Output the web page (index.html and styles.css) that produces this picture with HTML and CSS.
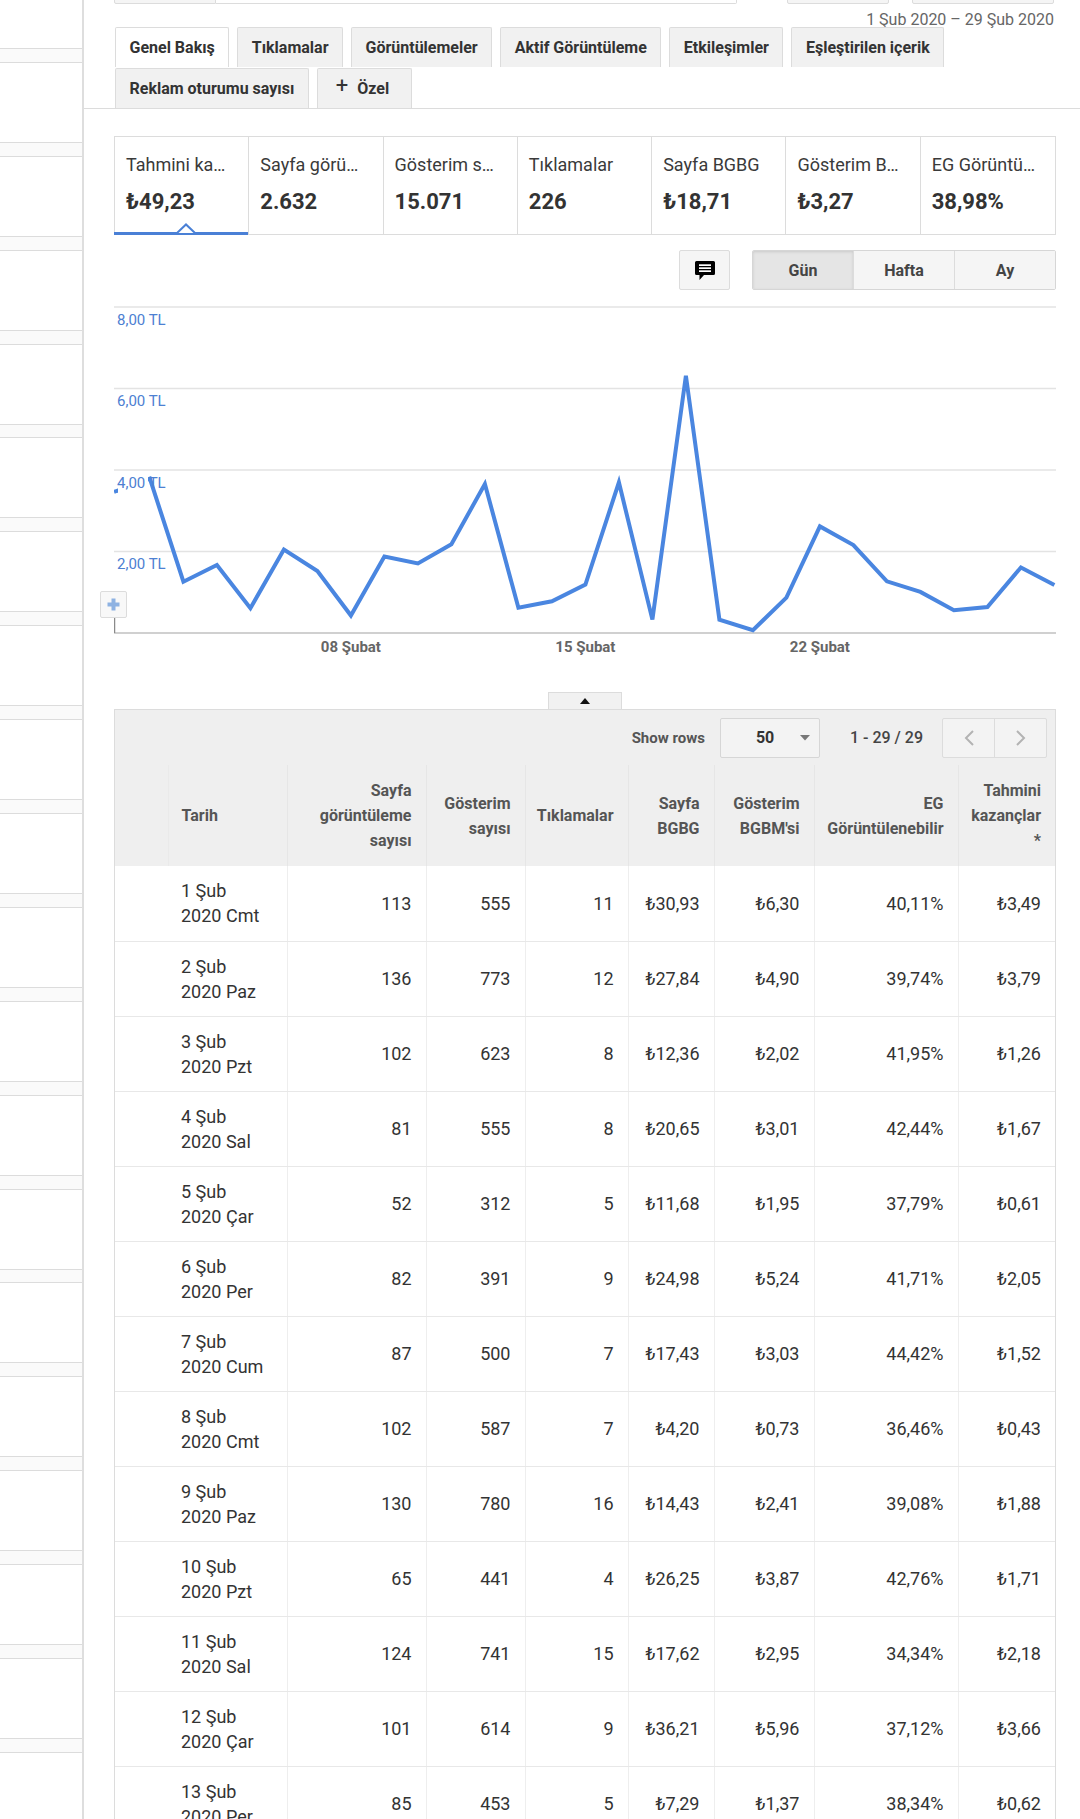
FILE: index.html
```html
<!DOCTYPE html>
<html lang="tr">
<head>
<meta charset="utf-8">
<title>AdSense Raporu</title>
<link rel="stylesheet" href="styles.css">
</head>
<body>
<div class="page">
  <aside class="sidebar">
    <div class="side-list">
      <div class="side-item"></div><div class="side-item"></div><div class="side-item"></div><div class="side-item"></div>
      <div class="side-item"></div><div class="side-item"></div><div class="side-item"></div><div class="side-item"></div>
      <div class="side-item"></div><div class="side-item"></div><div class="side-item"></div><div class="side-item"></div>
      <div class="side-item"></div><div class="side-item"></div><div class="side-item"></div><div class="side-item"></div>
      <div class="side-item"></div><div class="side-item"></div><div class="side-item"></div><div class="side-item"></div>
    </div>
  </aside>

  <main class="main">
    <div class="topbar">
      <div class="tb tb-sel"></div>
      <div class="tb tb-input"></div>
      <div class="tb tb-btn1"></div>
      <div class="tb tb-btn2"></div>
    </div>
    <div class="daterange">1 Şub 2020 – 29 Şub 2020</div>

    <div class="tabs-wrap">
      <nav class="tabs">
        <div class="tab active">Genel Bakış</div>
        <div class="tab">Tıklamalar</div>
        <div class="tab">Görüntülemeler</div>
        <div class="tab">Aktif Görüntüleme</div>
        <div class="tab">Etkileşimler</div>
        <div class="tab">Eşleştirilen içerik</div>
        <div class="tab">Reklam oturumu sayısı</div>
        <div class="tab tab-custom"><span class="plus">+</span>Özel</div>
      </nav>
    </div>

    <div class="content">
      <div class="cards">
        <div class="card selected">
          <div class="card-title">Tahmini ka…</div>
          <div class="card-value">₺49,23</div>
          <svg class="notch" width="22" height="11" viewBox="0 0 22 11"><polygon points="1,11 11,1.5 21,11" fill="#fff" stroke="#4a80d6" stroke-width="2"/></svg>
        </div>
        <div class="card"><div class="card-title">Sayfa görü…</div><div class="card-value">2.632</div></div>
        <div class="card"><div class="card-title">Gösterim s…</div><div class="card-value">15.071</div></div>
        <div class="card"><div class="card-title">Tıklamalar</div><div class="card-value">226</div></div>
        <div class="card"><div class="card-title">Sayfa BGBG</div><div class="card-value">₺18,71</div></div>
        <div class="card"><div class="card-title">Gösterim B…</div><div class="card-value">₺3,27</div></div>
        <div class="card"><div class="card-title">EG Görüntü…</div><div class="card-value">38,98%</div></div>
      </div>

      <div class="controls">
        <div class="icon-btn">
          <svg width="24" height="24" viewBox="0 0 24 24">
            <path d="M3.5 3h17A1.5 1.5 0 0 1 22 4.5v11a1.5 1.5 0 0 1-1.5 1.5H11l-4.5 5V17h-3A1.5 1.5 0 0 1 2 15.5v-11A1.5 1.5 0 0 1 3.5 3z" fill="#000"/>
            <rect x="6" y="6.3" width="12" height="1.7" fill="#fff"/>
            <rect x="6" y="9.3" width="12" height="1.7" fill="#fff"/>
            <rect x="6" y="12.3" width="12" height="1.7" fill="#fff"/>
          </svg>
        </div>
        <div class="seg">
          <div class="seg-btn on">Gün</div>
          <div class="seg-btn">Hafta</div>
          <div class="seg-btn">Ay</div>
        </div>
      </div>

      <div class="chart">
        <svg width="942" height="360" viewBox="114 300 942 360">
          <g stroke="#e3e3e3" stroke-width="1.5">
            <line x1="114" y1="308" x2="1056" y2="308"/>
            <line x1="114" y1="389.5" x2="1056" y2="389.5"/>
            <line x1="114" y1="471" x2="1056" y2="471"/>
            <line x1="114" y1="552.5" x2="1056" y2="552.5"/>
          </g>
          <line x1="114" y1="634" x2="1056" y2="634" stroke="#d0d0d0" stroke-width="2"/>
          <line x1="114.5" y1="619" x2="114.5" y2="634" stroke="#8a8a8a" stroke-width="1.5"/>
          <polyline fill="none" stroke="#4a86e0" stroke-width="4" stroke-linejoin="miter"
            points="114,493 116.4,492 149.9,479.7 183.4,582.7 216.9,566 250.4,609.2 283.9,550.6 317.4,572.1 350.9,616.5 384.4,557.5 417.9,564.4 451.4,545.3 484.9,485 518.4,608.8 551.9,602.3 585.4,585.6 618.9,483.4 652.4,620.6 685.9,376.8 719.4,620.6 752.9,631.2 786.4,598.6 819.9,527.4 853.4,546.1 886.9,582.3 920.4,592.9 953.9,611.2 987.4,608 1020.9,568.5 1054.4,586"/>
          <g class="ylab">
            <rect x="118" y="313" width="30" height="20" fill="#fff"/>
            <text x="117" y="325.5">8,00 TL</text>
            <rect x="118" y="394.5" width="30" height="20" fill="#fff"/>
            <text x="117" y="407">6,00 TL</text>
            <rect x="118" y="476" width="30" height="20" fill="#fff"/>
            <text x="117" y="488.5">4,00 TL</text>
            <rect x="118" y="557.5" width="30" height="20" fill="#fff"/>
            <text x="117" y="570">2,00 TL</text>
          </g>
          <g class="xlab">
            <text x="350.9" y="653">08 Şubat</text>
            <text x="585.4" y="653">15 Şubat</text>
            <text x="819.9" y="653">22 Şubat</text>
          </g>
        </svg>
        <div class="zoom-btn">
          <svg width="13" height="13" viewBox="0 0 13 13"><rect x="4.5" y="0.5" width="4" height="12" fill="#8eb2e2"/><rect x="0.5" y="4.5" width="12" height="4" fill="#8eb2e2"/></svg>
        </div>
      </div>

      <div class="table-toggle">
        <svg width="10" height="6" viewBox="0 0 10 6"><polygon points="0,6 5,0 10,6" fill="#111"/></svg>
      </div>

      <div class="table-box">
        <div class="toolbar">
          <span class="show-rows">Show rows</span>
          <div class="rows-select"><span class="rows-val">50</span><svg width="10" height="6" viewBox="0 0 10 6"><polygon points="0,0 10,0 5,5.5" fill="#777"/></svg></div>
          <span class="range">1 - 29 / 29</span>
          <div class="pager">
            <div class="pg-btn"><svg width="12" height="18" viewBox="0 0 12 18"><polyline points="10,2 3,9 10,16" fill="none" stroke="#b3b3b3" stroke-width="2"/></svg></div>
            <div class="pg-btn"><svg width="12" height="18" viewBox="0 0 12 18"><polyline points="2,2 9,9 2,16" fill="none" stroke="#b3b3b3" stroke-width="2"/></svg></div>
          </div>
        </div>
        <table class="data">
          <colgroup>
            <col class="c-blank"><col class="c-date"><col class="c-pv"><col class="c-imp"><col class="c-clk"><col class="c-bgbg"><col class="c-bgbm"><col class="c-eg"><col class="c-earn">
          </colgroup>
          <thead>
            <tr>
              <th class="blank"></th>
              <th class="date">Tarih</th>
              <th>Sayfa görüntüleme sayısı</th>
              <th>Gösterim sayısı</th>
              <th>Tıklamalar</th>
              <th>Sayfa BGBG</th>
              <th>Gösterim BGBM'si</th>
              <th>EG Görüntülenebilir</th>
              <th>Tahmini kazançlar *</th>
            </tr>
          </thead>
          <tbody>
            <tr><td class="blank"></td><td class="date">1 Şub<br>2020 Cmt</td><td>113</td><td>555</td><td>11</td><td>₺30,93</td><td>₺6,30</td><td>40,11%</td><td>₺3,49</td></tr>
            <tr><td class="blank"></td><td class="date">2 Şub<br>2020 Paz</td><td>136</td><td>773</td><td>12</td><td>₺27,84</td><td>₺4,90</td><td>39,74%</td><td>₺3,79</td></tr>
            <tr><td class="blank"></td><td class="date">3 Şub<br>2020 Pzt</td><td>102</td><td>623</td><td>8</td><td>₺12,36</td><td>₺2,02</td><td>41,95%</td><td>₺1,26</td></tr>
            <tr><td class="blank"></td><td class="date">4 Şub<br>2020 Sal</td><td>81</td><td>555</td><td>8</td><td>₺20,65</td><td>₺3,01</td><td>42,44%</td><td>₺1,67</td></tr>
            <tr><td class="blank"></td><td class="date">5 Şub<br>2020 Çar</td><td>52</td><td>312</td><td>5</td><td>₺11,68</td><td>₺1,95</td><td>37,79%</td><td>₺0,61</td></tr>
            <tr><td class="blank"></td><td class="date">6 Şub<br>2020 Per</td><td>82</td><td>391</td><td>9</td><td>₺24,98</td><td>₺5,24</td><td>41,71%</td><td>₺2,05</td></tr>
            <tr><td class="blank"></td><td class="date">7 Şub<br>2020 Cum</td><td>87</td><td>500</td><td>7</td><td>₺17,43</td><td>₺3,03</td><td>44,42%</td><td>₺1,52</td></tr>
            <tr><td class="blank"></td><td class="date">8 Şub<br>2020 Cmt</td><td>102</td><td>587</td><td>7</td><td>₺4,20</td><td>₺0,73</td><td>36,46%</td><td>₺0,43</td></tr>
            <tr><td class="blank"></td><td class="date">9 Şub<br>2020 Paz</td><td>130</td><td>780</td><td>16</td><td>₺14,43</td><td>₺2,41</td><td>39,08%</td><td>₺1,88</td></tr>
            <tr><td class="blank"></td><td class="date">10 Şub<br>2020 Pzt</td><td>65</td><td>441</td><td>4</td><td>₺26,25</td><td>₺3,87</td><td>42,76%</td><td>₺1,71</td></tr>
            <tr><td class="blank"></td><td class="date">11 Şub<br>2020 Sal</td><td>124</td><td>741</td><td>15</td><td>₺17,62</td><td>₺2,95</td><td>34,34%</td><td>₺2,18</td></tr>
            <tr><td class="blank"></td><td class="date">12 Şub<br>2020 Çar</td><td>101</td><td>614</td><td>9</td><td>₺36,21</td><td>₺5,96</td><td>37,12%</td><td>₺3,66</td></tr>
            <tr><td class="blank"></td><td class="date">13 Şub<br>2020 Per</td><td>85</td><td>453</td><td>5</td><td>₺7,29</td><td>₺1,37</td><td>38,34%</td><td>₺0,62</td></tr>
          </tbody>
        </table>
      </div>
    </div>
  </main>
</div>
</body>
</html>
```

FILE: styles.css
```css
* { box-sizing: border-box; }

html, body {
  margin: 0;
  padding: 0;
  background: #fff;
}

body {
  font-family: Roboto, "Noto Sans", "DejaVu Sans", sans-serif;
  color: #333;
  overflow: hidden;
}

.page {
  display: flex;
  min-height: 1819px;
}

/* ---------- left sidebar ---------- */
.sidebar {
  width: 84px;
  flex: none;
  border-right: 2px solid #dedede;
  background: #fafafa;
  overflow: hidden;
}

.side-list { margin-top: -32px; }

.side-item {
  height: 81px;
  margin-bottom: 12.9px;
  border-top: 1px solid #dcdcdc;
  border-bottom: 1px solid #dcdcdc;
  background: #fff;
}

/* ---------- main ---------- */
.main {
  flex: 1;
  min-width: 0;
}

.topbar {
  display: flex;
  align-items: flex-end;
  height: 4px;
  padding-left: 30px;
}

.tb {
  flex: none;
  height: 40px;
  border: 1px solid #dcdcdc;
  border-radius: 2px;
  background: #fff;
}
.tb-sel { width: 102px; background: #f5f5f5; border-radius: 2px 0 0 2px; }
.tb-input { width: 521px; border-left: none; border-radius: 0 2px 2px 0; }
.tb-btn1 { width: 102px; margin-left: 50px; background: #f5f5f5; }
.tb-btn2 { width: 142px; margin-left: 23px; background: #f5f5f5; }

.daterange {
  height: 23px;
  line-height: 32px;
  text-align: right;
  padding-right: 26px;
  font-size: 16px;
  color: #666;
  white-space: nowrap;
}

/* ---------- tabs ---------- */
.tabs-wrap {
  border-bottom: 1px solid #dcdcdc;
  padding: 0 24px 0 31px;
}

.tabs {
  display: flex;
  flex-wrap: wrap;
  column-gap: 8px;
  row-gap: 1px;
}

.tab {
  height: 40px;
  padding: 0 13.5px;
  display: flex;
  align-items: center;
  border: 1px solid #dcdcdc;
  border-bottom: none;
  border-radius: 2px 2px 0 0;
  background: #f1f1f1;
  font-size: 16px;
  font-weight: 700;
  color: #333;
  white-space: nowrap;
}
.tab.active { background: #fff; }
.tab-custom { padding: 0 22px 0 18px; }
.tab-custom .plus {
  font-weight: 400;
  font-size: 22px;
  margin-right: 9px;
  line-height: 1;
  position: relative;
  top: -3px;
}

/* ---------- content ---------- */
.content {
  padding: 0 24px 0 30px;
}

.cards {
  margin-top: 27px;
  height: 99px;
  display: grid;
  grid-template-columns: repeat(7, 1fr);
  border: 1px solid #dcdcdc;
}

.card {
  position: relative;
  padding: 16px 0 0 11px;
  border-right: 1px solid #dcdcdc;
  white-space: nowrap;
}
.card:last-child { border-right: none; }

.card-title {
  font-size: 18px;
  line-height: 24px;
  color: #3a3a3a;
}
.card-value {
  margin-top: 10px;
  font-size: 22px;
  line-height: 30px;
  font-weight: 700;
  color: #333;
}

.card.selected::after {
  content: "";
  position: absolute;
  left: -1px;
  right: 0;
  bottom: -1px;
  height: 3px;
  background: #4a80d6;
}
.notch {
  position: absolute;
  left: 60px;
  bottom: 0;
  z-index: 2;
}

/* ---------- chart controls ---------- */
.controls {
  display: flex;
  justify-content: flex-end;
  height: 40px;
  margin-top: 15px;
}

.icon-btn {
  width: 51px;
  height: 40px;
  margin-right: 22px;
  display: flex;
  align-items: center;
  justify-content: center;
  border: 1px solid #dcdcdc;
  border-radius: 2px;
  background: #f5f5f5;
}

.seg {
  display: flex;
  width: 304px;
  border: 1px solid #d6d6d6;
  border-radius: 2px;
  overflow: hidden;
}
.seg-btn {
  flex: 1;
  display: flex;
  align-items: center;
  justify-content: center;
  background: #f5f5f5;
  border-left: 1px solid #dcdcdc;
  font-size: 16px;
  font-weight: 700;
  color: #444;
}
.seg-btn:first-child { border-left: none; }
.seg-btn.on {
  background: #e5e5e5;
  box-shadow: inset 0 1px 3px rgba(0, 0, 0, 0.12);
}

/* ---------- chart ---------- */
.chart {
  position: relative;
  height: 360px;
  margin-top: 9px;
}
.chart > svg { display: block; }

.ylab text {
  font-family: Roboto, "Noto Sans", sans-serif;
  font-size: 15px;
  fill: #4d80d2;
}
.xlab text {
  font-family: Roboto, "Noto Sans", sans-serif;
  font-size: 15px;
  font-weight: 700;
  fill: #666;
  text-anchor: middle;
}

.zoom-btn {
  position: absolute;
  left: -14px;
  top: 292px;
  width: 27px;
  height: 27px;
  display: flex;
  align-items: center;
  justify-content: center;
  border: 1px solid #dcdcdc;
  border-radius: 2px;
  background: #f8f8f8;
}

/* ---------- table ---------- */
.table-toggle {
  width: 74px;
  height: 17px;
  margin: 33px auto 0;
  display: flex;
  align-items: center;
  justify-content: center;
  border: 1px solid #dcdcdc;
  border-bottom: none;
  background: #f1f1f1;
}

.table-box {
  border: 1px solid #dcdcdc;
  background: #efefef;
}

.toolbar {
  height: 55px;
  display: flex;
  align-items: center;
  justify-content: flex-end;
  padding-right: 8px;
}

.show-rows {
  font-size: 15px;
  font-weight: 700;
  color: #555;
  margin-right: 15px;
}

.rows-select {
  width: 100px;
  height: 40px;
  display: flex;
  align-items: center;
  justify-content: space-between;
  padding: 0 9px 0 35px;
  border: 1px solid #d6d6d6;
  border-radius: 2px;
  background: #f3f3f3;
  margin-right: 30px;
}
.rows-val {
  font-size: 16px;
  font-weight: 700;
  color: #333;
}

.range {
  font-size: 16px;
  font-weight: 500;
  color: #444;
  margin-right: 19px;
}

.pager {
  display: flex;
  width: 105px;
  height: 40px;
  border: 1px solid #dcdcdc;
  border-radius: 2px;
  background: #f3f3f3;
}
.pg-btn {
  flex: 1;
  display: flex;
  align-items: center;
  justify-content: center;
}
.pg-btn + .pg-btn { border-left: 1px solid #dcdcdc; }

.data {
  width: 100%;
  table-layout: fixed;
  border-collapse: collapse;
}

.c-blank { width: 53px; }
.c-date { width: 119px; }
.c-pv { width: 139px; }
.c-imp { width: 99px; }
.c-clk { width: 103px; }
.c-bgbg { width: 86px; }
.c-bgbm { width: 100px; }
.c-eg { width: 144px; }
.c-earn { width: 97px; }

.data th {
  height: 101px;
  padding: 0 14px 0 6px;
  vertical-align: middle;
  text-align: right;
  font-size: 16px;
  font-weight: 700;
  line-height: 25px;
  color: #555;
  border-left: 1px solid #e6e6e6;
  background: #efefef;
}
.data th.blank { border-left: none; }
.data th.date {
  text-align: left;
  padding-left: 13px;
  border-left-color: #eaeaea;
}

.data td {
  height: 75px;
  padding: 0 14px 0 6px;
  vertical-align: middle;
  text-align: right;
  font-size: 18px;
  line-height: 25px;
  color: #333;
  background: #fff;
  border-left: 1px solid #eeeeee;
  border-bottom: 1px solid #e8e8e8;
  white-space: nowrap;
}
.data td.blank { border-left: none; }
.data td.date {
  border-left: none;
  text-align: left;
  padding-left: 13px;
}
```
